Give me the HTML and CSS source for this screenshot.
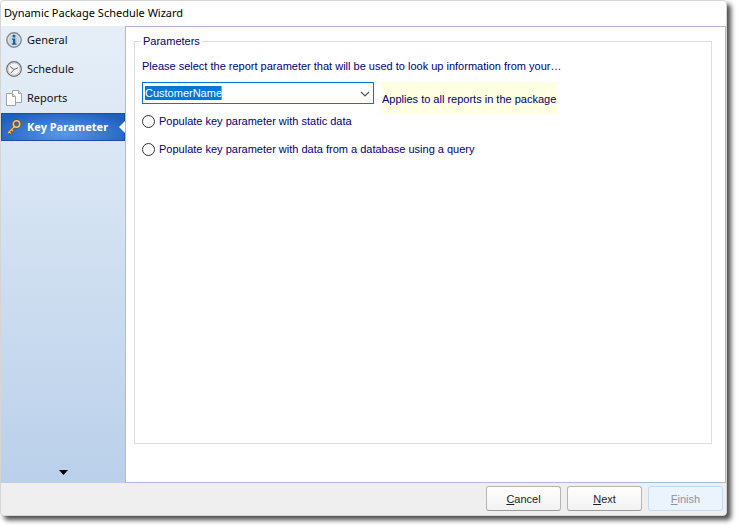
FILE: index.html
```html
<!DOCTYPE html>
<html lang="en">
<head>
<meta charset="utf-8">
<title>Dynamic Package Schedule Wizard</title>
<link rel="stylesheet" href="styles.css">
</head>
<body>
<div class="window">
  <header class="titlebar"><h1>Dynamic Package Schedule Wizard</h1></header>
  <div class="body">
    <nav class="sidebar">
      <a class="step" href="#general">
        <svg class="icon" viewBox="0 0 16 16">
          <circle cx="8" cy="8" r="7.2" fill="#d5dde5" stroke="#85898d" stroke-width="1.4"/>
          <circle cx="8" cy="8" r="5.6" fill="#c3d4e3" stroke="#dfe6ec" stroke-width="1"/>
          <circle cx="8" cy="4" r="1.5" fill="#17609c"/>
          <path d="M6 6.5h3.3v5h1.2v1.3H5.8v-1.3H7V7.7H6z" fill="#17609c"/>
        </svg>
        <span>General</span>
      </a>
      <a class="step" href="#schedule">
        <svg class="icon" viewBox="0 0 16 16">
          <circle cx="8" cy="8" r="7.3" fill="#f4f4f4" stroke="#66696c" stroke-width="1.2"/>
          <circle cx="8" cy="8" r="6" fill="none" stroke="#c6c8ca" stroke-width="1"/>
          <path d="M4 5.5l4 3 4-1.8M8 8.5l-3 3.5" fill="none" stroke="#66696c" stroke-width="1"/>
        </svg>
        <span>Schedule</span>
      </a>
      <a class="step" href="#reports">
        <svg class="icon" viewBox="0 0 16 16">
          <path d="M6.5 .5h6l3 3v9h-9z" fill="#fbfbfb" stroke="#a0a3a6"/>
          <path d="M12.5 .5v3h3" fill="#ddd" stroke="#a0a3a6"/>
          <path d="M.5 3.5h6l3 3v9h-9z" fill="#fff" stroke="#a0a3a6"/>
          <path d="M6.5 3.5v3h3" fill="#ddd" stroke="#a0a3a6"/>
        </svg>
        <span>Reports</span>
      </a>
      <a class="step current" href="#key" aria-current="step">
        <svg class="icon" viewBox="0 0 16 16">
          <path d="M9 7L2 14M3 13l2 2M5.5 10.5l2 2" fill="none" stroke="#6b4a1c" stroke-width="2.8"/>
          <circle cx="10.5" cy="5" r="3.2" fill="none" stroke="#6b4a1c" stroke-width="3"/>
          <path d="M9 7L2 14M3.3 13l1.5 1.5M5.7 10.7l1.5 1.5" fill="none" stroke="#f3bd66" stroke-width="1.4"/>
          <circle cx="10.5" cy="5" r="3.2" fill="none" stroke="#f6c778" stroke-width="1.6"/>
        </svg>
        <span>Key Parameter</span>
      </a>
      <button class="more" type="button" aria-label="More steps"><svg viewBox="0 0 9 5"><path d="M0 0h9L4.5 5z"/></svg></button>
    </nav>
    <main class="page">
      <fieldset class="group">
        <legend>Parameters</legend>
        <label class="prompt" for="param">Please select the report parameter that will be used to look up information from your…</label>
        <div class="row">
          <div class="combo">
            <select id="param"><option>CustomerName</option></select>
            <svg class="chevron" viewBox="0 0 10 6"><path d="M1 1l4 4 4-4" fill="none" stroke="#555" stroke-width="1.2"/></svg>
          </div>
          <p class="note">Applies to all reports in the package</p>
        </div>
        <label class="option"><input type="radio" name="source"><span>Populate key parameter with static data</span></label>
        <label class="option"><input type="radio" name="source"><span>Populate key parameter with data from a database using a query</span></label>
      </fieldset>
    </main>
  </div>
  <footer class="actions">
    <button type="button"><u>C</u>ancel</button>
    <button type="button"><u>N</u>ext</button>
    <button type="button" disabled><u>F</u>inish</button>
  </footer>
</div>
</body>
</html>
```
FILE: styles.css
```css
* { box-sizing: border-box; }

body {
  margin: 0;
  height: 100vh;
  padding: 0 15px 15px 0;
  background: #fff;
  color: #000080;
  font: 11px/14px "Liberation Sans", Arial, sans-serif;
}

.window {
  display: flex;
  flex-direction: column;
  height: 100%;
  border: 1px solid #d5d5d5;
  border-radius: 4px;
  background: #fff;
  box-shadow: 4px 4px 5px 0 rgba(0, 0, 0, .7);
}

.titlebar {
  height: 25px;
  padding: 3px;
  color: #000;
}

.titlebar h1 {
  margin: 0;
  font: 11px/18px "Noto Sans", sans-serif;
}

.body {
  display: flex;
  flex: 1;
  min-height: 0;
}

.sidebar {
  display: flex;
  flex-direction: column;
  width: 124px;
  background: linear-gradient(#e6eff8, #bad0ea);
  font: 11px/18px "Noto Sans", sans-serif;
}

.step {
  display: flex;
  align-items: center;
  gap: 5px;
  height: 29px;
  padding: 0 5px 1px;
  color: #111;
  text-decoration: none;
}

.icon {
  flex: none;
  width: 16px;
  height: 16px;
}

.step.current {
  position: relative;
  height: 28px;
  border: 1px solid #1a4f9f;
  padding: 0 4px;
  background: radial-gradient(ellipse at 50% 75%, #5b98e8, #1f5fbd 85%);
  color: #fff;
  font-weight: bold;
  white-space: nowrap;
}

.step.current::after {
  content: "";
  position: absolute;
  top: 7px;
  right: -1px;
  border: 6px solid transparent;
  border-right-color: #fff;
  border-left: 0;
}

.more {
  display: flex;
  justify-content: center;
  margin-top: auto;
  border: 0;
  padding: 0 0 8px;
  background: none;
}

.more svg {
  width: 9px;
  height: 5px;
}

.page {
  display: flex;
  flex: 1;
  min-width: 0;
  border: 1px solid #a9bdd3;
  padding: 7px 13px 38px 8px;
}

.group {
  flex: 1;
  min-width: 0;
  margin: 0;
  border: 1px solid #dcdcdc;
  padding: 11px 7px;
}

.group legend {
  margin-left: -1px;
  padding: 0 2px;
}

.prompt { display: block; }

.row {
  display: flex;
  gap: 8px;
  margin-top: 9px;
}

.combo {
  position: relative;
  width: 232px;
  height: 22px;
}

.combo select {
  display: block;
  appearance: none;
  width: 100%;
  height: 100%;
  border: 1px solid #0078d7;
  border-radius: 0;
  padding: 0 20px 1px 2px;
  background: linear-gradient(90deg, #0078d7 76px, #f28a30 76px) 2px 3px / 77px 14px no-repeat #fff;
  color: #fff;
  font: inherit;
}

.chevron {
  position: absolute;
  top: 9px;
  right: 4px;
  width: 10px;
  height: 6px;
  pointer-events: none;
}

.note {
  height: 32px;
  margin: 0;
  padding: 10px 2px 0 0;
  background: #ffffe1;
}

.option {
  display: flex;
  align-items: center;
  gap: 4px;
  height: 28px;
}

.row + .option { margin-top: -7px; }

.option input {
  appearance: none;
  width: 13px;
  height: 13px;
  margin: 0;
  border: 1px solid #333;
  border-radius: 50%;
  background: #fff;
}

.actions {
  display: flex;
  justify-content: flex-end;
  gap: 6px;
  padding: 3px 3px 4px;
  border-radius: 0 0 4px 4px;
  background: #efefef;
}

.actions button {
  width: 75px;
  height: 25px;
  border: 1px solid #b5b5b5;
  border-bottom-color: #999;
  border-radius: 3px;
  padding: 0;
  background: linear-gradient(#fff, #f2f2f4);
  color: #1e1e1e;
  font: inherit;
}

.actions button:disabled {
  border-color: #c6d9ef;
  background: #ebf4fc;
  color: #8b929c;
}
```
